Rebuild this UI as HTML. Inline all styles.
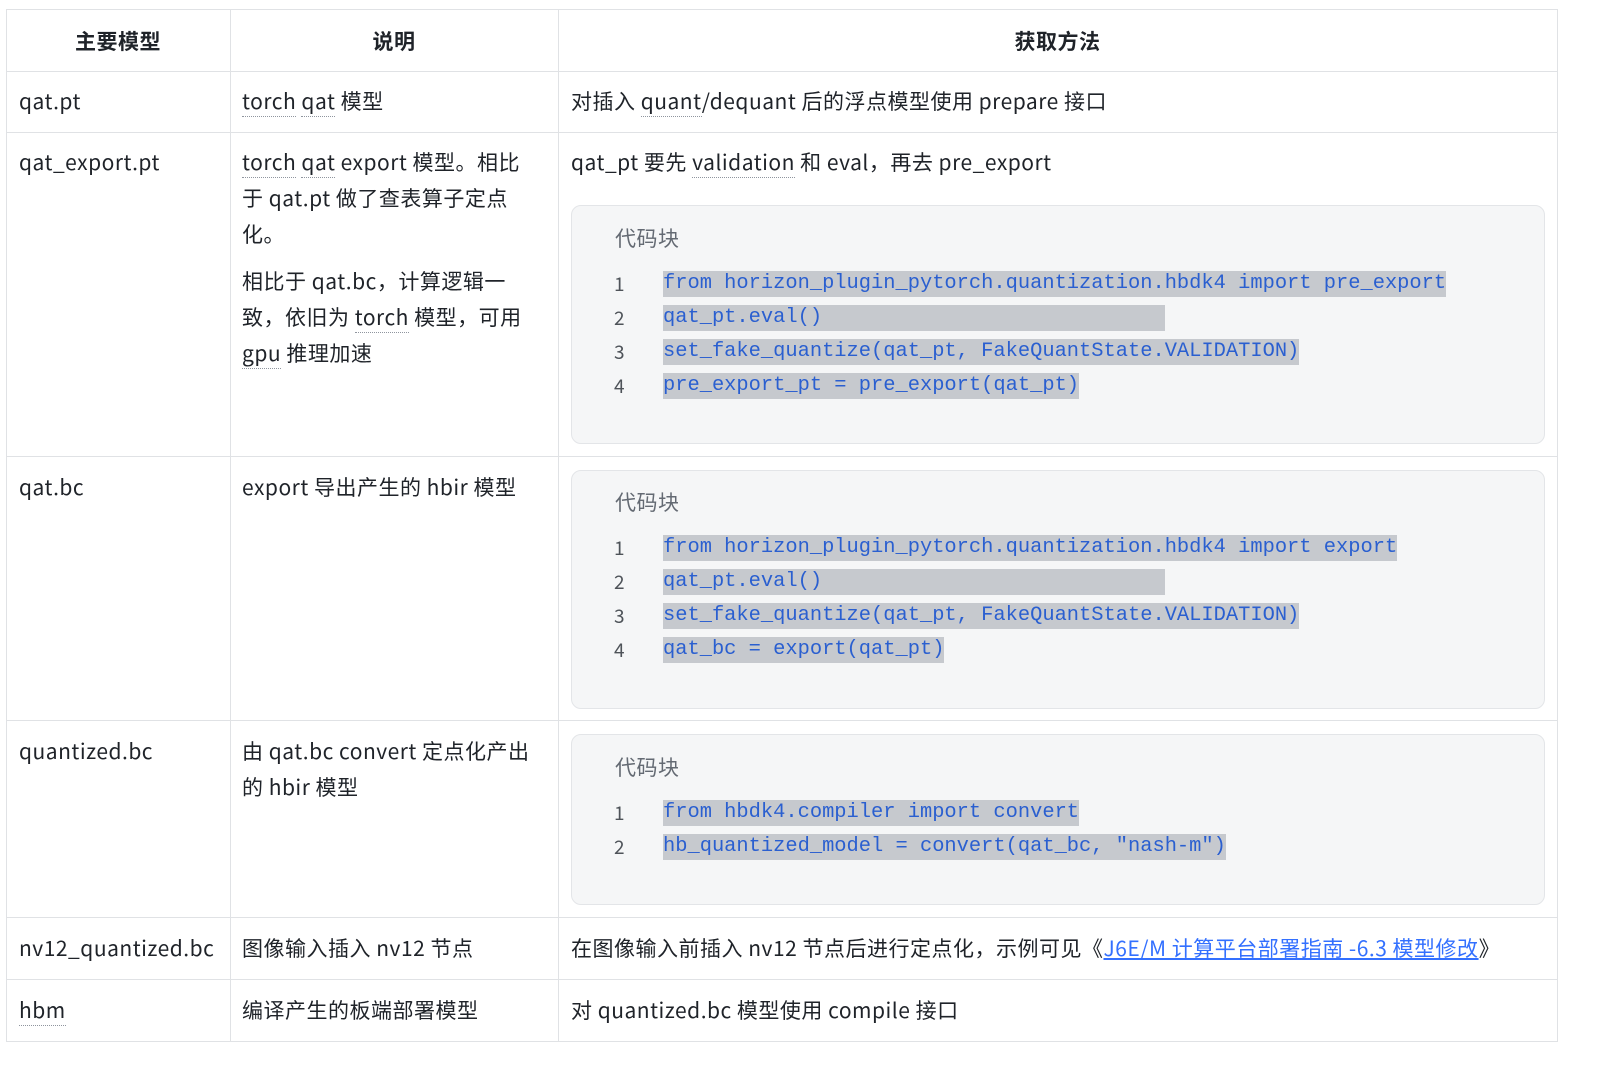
<!DOCTYPE html>
<html><head><meta charset="utf-8"><style>
body{margin:0;width:1606px;height:1076px;background:#fff;position:relative;overflow:hidden;font-family:"Noto Sans CJK SC","Liberation Sans",sans-serif;color:#1f2329;font-size:21px;letter-spacing:0.5px}
.a{position:absolute;white-space:nowrap;line-height:36px}
.h{position:absolute;background:#e0e2e5}
.v{position:absolute;background:#e0e2e5}
.th{font-weight:bold;text-align:center}
.cb{position:absolute;left:571px;width:972px;background:#f5f6f7;border:1px solid #e3e5e8;border-radius:10px}
.lbl{position:absolute;left:615px;color:#646a73;font-size:21px;line-height:26px}
.n{position:absolute;left:614px;font-size:19px;color:#4e5359;line-height:26px;letter-spacing:0}
.c{position:absolute;left:663px;height:26px;line-height:26px;background:#c6c9ce;font-family:"Liberation Mono",monospace;font-size:20.4px;letter-spacing:0;color:#2a5fd0;white-space:pre}
.u{border-bottom:1px dotted #8f959e}
a{color:#3370ff;text-decoration:underline}
</style></head><body>
<div class="h" style="left:6px;top:9px;width:1551px;height:1px"></div>
<div class="h" style="left:6px;top:71px;width:1551px;height:1px"></div>
<div class="h" style="left:6px;top:132px;width:1551px;height:1px"></div>
<div class="h" style="left:6px;top:456px;width:1551px;height:1px"></div>
<div class="h" style="left:6px;top:720px;width:1551px;height:1px"></div>
<div class="h" style="left:6px;top:917px;width:1551px;height:1px"></div>
<div class="h" style="left:6px;top:979px;width:1551px;height:1px"></div>
<div class="h" style="left:6px;top:1041px;width:1551px;height:1px"></div>
<div class="v" style="left:6px;top:9px;width:1px;height:1033px"></div>
<div class="v" style="left:230px;top:9px;width:1px;height:1033px"></div>
<div class="v" style="left:558px;top:9px;width:1px;height:1033px"></div>
<div class="v" style="left:1557px;top:9px;width:1px;height:1033px"></div>

<div class="a th" style="left:6px;width:224px;top:23px">主要模型</div>
<div class="a th" style="left:230px;width:328px;top:23px">说明</div>
<div class="a th" style="left:558px;width:999px;top:23px">获取方法</div>

<div class="a" style="left:19px;top:83px">qat.pt</div>
<div class="a" style="left:242px;top:83px"><span class="u">torch</span> <span class="u">qat</span> 模型</div>
<div class="a" style="left:571px;top:83px">对插入 <span class="u">quant</span>/dequant 后的浮点模型使用 prepare 接口</div>

<div class="a" style="left:19px;top:144px">qat_export.pt</div>
<div class="a" style="left:242px;top:144px"><span class="u">torch</span> <span class="u">qat</span> export 模型。相比<br>于 qat.pt 做了查表算子定点<br>化。</div>
<div class="a" style="left:242px;top:263px"><span>相比于 qat.bc，计算逻辑一</span><br>致，依旧为 <span class="u">torch</span> 模型，可用<br><span class="u">gpu</span> 推理加速</div>
<div class="a" style="left:571px;top:144px">qat_pt 要先 <span class="u">validation</span> 和 eval，再去 pre_export</div>
<div class="cb" style="top:205px;height:237px"></div>
<div class="lbl" style="top:225px">代码块</div>
<div class="n" style="top:271px">1</div><div class="c" style="top:271px">from horizon_plugin_pytorch.quantization.hbdk4 import pre_export</div>
<div class="n" style="top:305px">2</div><div class="c" style="top:305px;width:502px">qat_pt.eval()</div>
<div class="n" style="top:339px">3</div><div class="c" style="top:339px">set_fake_quantize(qat_pt, FakeQuantState.VALIDATION)</div>
<div class="n" style="top:373px">4</div><div class="c" style="top:373px">pre_export_pt = pre_export(qat_pt)</div>

<div class="a" style="left:19px;top:469px">qat.bc</div>
<div class="a" style="left:242px;top:469px">export 导出产生的 hbir 模型</div>
<div class="cb" style="top:470px;height:237px"></div>
<div class="lbl" style="top:489px">代码块</div>
<div class="n" style="top:535px">1</div><div class="c" style="top:535px">from horizon_plugin_pytorch.quantization.hbdk4 import export</div>
<div class="n" style="top:569px">2</div><div class="c" style="top:569px;width:502px">qat_pt.eval()</div>
<div class="n" style="top:603px">3</div><div class="c" style="top:603px">set_fake_quantize(qat_pt, FakeQuantState.VALIDATION)</div>
<div class="n" style="top:637px">4</div><div class="c" style="top:637px">qat_bc = export(qat_pt)</div>

<div class="a" style="left:19px;top:733px">quantized.bc</div>
<div class="a" style="left:242px;top:733px">由 qat.bc convert 定点化产出<br>的 hbir 模型</div>
<div class="cb" style="top:734px;height:169px"></div>
<div class="lbl" style="top:754px">代码块</div>
<div class="n" style="top:800px">1</div><div class="c" style="top:800px">from hbdk4.compiler import convert</div>
<div class="n" style="top:834px">2</div><div class="c" style="top:834px">hb_quantized_model = convert(qat_bc, "nash-m")</div>

<div class="a" style="left:19px;top:930px">nv12_quantized.bc</div>
<div class="a" style="left:242px;top:930px">图像输入插入 nv12 节点</div>
<div class="a" style="left:571px;top:930px">在图像输入前插入 nv12 节点后进行定点化，示例可见《<a>J6E/M 计算平台部署指南 -6.3 模型修改</a>》</div>

<div class="a" style="left:19px;top:992px"><span class="u">hbm</span></div>
<div class="a" style="left:242px;top:992px">编译产生的板端部署模型</div>
<div class="a" style="left:571px;top:992px">对 quantized.bc 模型使用 compile 接口</div>
</body></html>
